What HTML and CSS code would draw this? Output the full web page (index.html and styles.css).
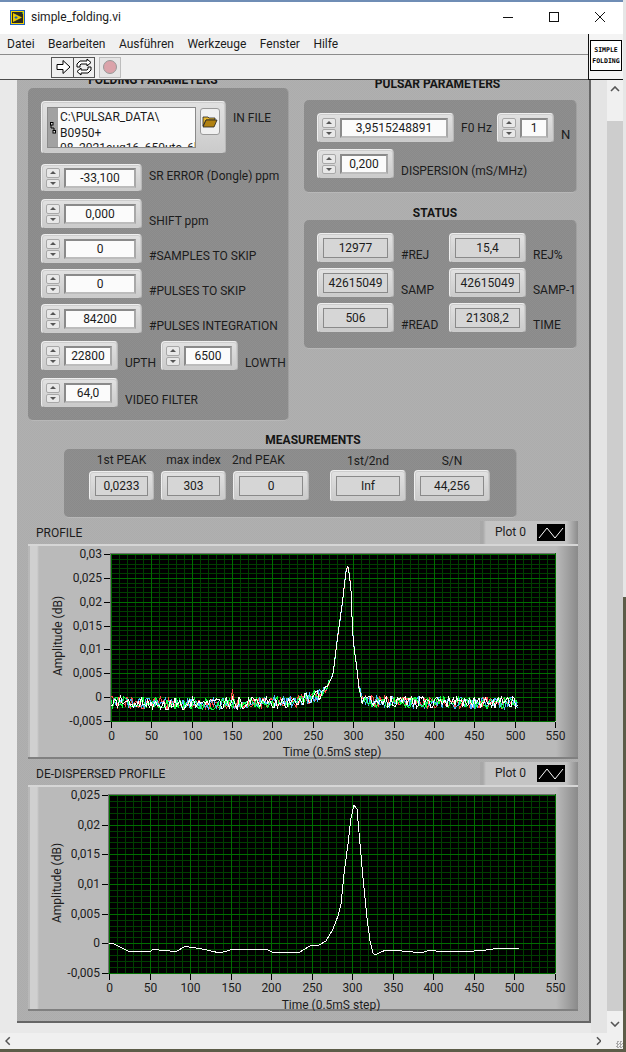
FILE: index.html
```html
<!DOCTYPE html>
<html lang="de">
<head>
<meta charset="utf-8">
<title>simple_folding.vi</title>
<link rel="stylesheet" href="styles.css">
</head>
<body>
<div class="window">
  <header class="titlebar">
    <svg class="vi-icon" viewBox="0 0 15 15" width="15" height="15">
      <rect x="0.5" y="0.5" width="14" height="14" fill="#f4d000" stroke="#1c5fc0"/>
      <rect x="2" y="2" width="11" height="11" fill="#2a2a20"/>
      <path d="M3 3L12 7.5L3 12Z" fill="#e8c800"/>
      <path d="M4.5 7.5h3M6 6v3" stroke="#1c5fc0" fill="none"/>
      <path d="M12 2h1v2h-1z" fill="#30a040"/>
    </svg>
    <span class="title-text">simple_folding.vi</span>
    <span class="winbtns">
      <svg viewBox="0 0 12 12" width="12" height="12"><path d="M1 6.5h10" stroke="#111" fill="none"/></svg>
      <svg viewBox="0 0 12 12" width="12" height="12"><rect x="1.5" y="1.5" width="9" height="9" stroke="#111" fill="none"/></svg>
      <svg viewBox="0 0 12 12" width="12" height="12"><path d="M1 1l10 10M11 1L1 11" stroke="#111" fill="none"/></svg>
    </span>
  </header>
  <nav class="menubar">
    <span>Datei</span><span>Bearbeiten</span><span>Ausführen</span><span>Werkzeuge</span><span>Fenster</span><span>Hilfe</span>
  </nav>
  <div class="toolbar">
    <div class="btn-group">
      <span class="tb-btn">
        <svg viewBox="0 0 18 18" width="18" height="18"><path d="M3 6.5h6V2.5l7 6.5-7 6.5v-4H3z" fill="#fff" stroke="#000"/></svg>
      </span>
      <span class="tb-btn">
        <svg viewBox="0 0 20 18" width="20" height="18"><path d="M3 9V6l3-3h7V1l4 3.5L13 8V6H7L6 7v2zM17 9v3l-3 3H7v2l-4-3.5L7 10v2h6l1-1V9z" fill="#fff" stroke="#000"/></svg>
      </span>
    </div>
    <span class="stop-btn"><span class="stop-dot"></span></span>
    <div class="vi-badge"><span class="vi-badge-box">SIMPLE<br>FOLDING</span></div>
  </div>
  <div class="workarea">
    <main class="canvas">
      <section class="upper">
        <div class="col-left">
          <h2 class="head head-fold">FOLDING PARAMETERS</h2>
          <div class="group group-fold">
            <div class="row">
              <div class="ctl ctl-file">
                <div class="pathbox">
                  <span class="pathbar">
                    <svg viewBox="0 0 6 12" width="6" height="12"><path d="M1 2v4h3v4" fill="none" stroke="#000"/><rect x="0.5" y="0.5" width="2.5" height="2.5" fill="#ddd" stroke="#000"/><rect x="3" y="8.5" width="2.5" height="2.5" fill="#ddd" stroke="#000"/></svg>
                  </span>
                  <span class="pathtext">C:\PULSAR_DATA\<br>B0950+<br>08_2021aug16_650utc_6b</span>
                </div>
                <span class="browse">
                  <svg viewBox="0 0 16 13" width="16" height="13"><path d="M1 2h5l1 1h6v2H4L1 11z" fill="#e8b830" stroke="#222" stroke-width=".8"/><path d="M1 12L4 5h11l-3 7z" fill="#b08010" stroke="#222" stroke-width=".8"/></svg>
                </span>
              </div>
              <span class="lab lab-file">IN FILE</span>
            </div>
            <div class="row gap10">
              <div class="ctl num num-short w-wide"><span class="spin"><i class="up"></i><i class="dn"></i></span><span class="field">-33,100</span></div>
              <span class="lab lab-high">SR ERROR (Dongle) ppm</span>
            </div>
            <div class="row gap7">
              <div class="ctl num w-wide"><span class="spin"><i class="up"></i><i class="dn"></i></span><span class="field">0,000</span></div>
              <span class="lab">SHIFT ppm</span>
            </div>
            <div class="row gap5">
              <div class="ctl num w-wide"><span class="spin"><i class="up"></i><i class="dn"></i></span><span class="field">0</span></div>
              <span class="lab">#SAMPLES TO SKIP</span>
            </div>
            <div class="row gap5">
              <div class="ctl num w-wide"><span class="spin"><i class="up"></i><i class="dn"></i></span><span class="field">0</span></div>
              <span class="lab">#PULSES TO SKIP</span>
            </div>
            <div class="row gap5">
              <div class="ctl num w-wide"><span class="spin"><i class="up"></i><i class="dn"></i></span><span class="field">84200</span></div>
              <span class="lab">#PULSES INTEGRATION</span>
            </div>
            <div class="row gap7">
              <div class="ctl num w-mid"><span class="spin"><i class="up"></i><i class="dn"></i></span><span class="field">22800</span></div>
              <span class="lab lab-fix36">UPTH</span>
              <div class="ctl num w-mid"><span class="spin"><i class="up"></i><i class="dn"></i></span><span class="field">6500</span></div>
              <span class="lab">LOWTH</span>
            </div>
            <div class="row gap7">
              <div class="ctl num w-mid"><span class="spin"><i class="up"></i><i class="dn"></i></span><span class="field">64,0</span></div>
              <span class="lab">VIDEO FILTER</span>
            </div>
          </div>
        </div>
        <div class="col-right">
          <h2 class="head head-pulsar">PULSAR PARAMETERS</h2>
          <div class="group group-pulsar">
            <div class="row">
              <div class="ctl num w-f0"><span class="spin"><i class="up"></i><i class="dn"></i></span><span class="field">3,9515248891</span></div>
              <span class="lab lab-mid lab-fix36">F0 Hz</span>
              <div class="ctl num w-n"><span class="spin"><i class="up"></i><i class="dn"></i></span><span class="field">1</span></div>
              <span class="lab lab-n">N</span>
            </div>
            <div class="row gap6">
              <div class="ctl num w-mid"><span class="spin"><i class="up"></i><i class="dn"></i></span><span class="field">0,200</span></div>
              <span class="lab">DISPERSION (mS/MHz)</span>
            </div>
          </div>
          <h2 class="head head-status">STATUS</h2>
          <div class="group group-status">
            <div class="row">
              <div class="ctl ind w-mid"><span class="field">12977</span></div><span class="lab lab-fix48">#REJ</span>
              <div class="ctl ind w-mid"><span class="field">15,4</span></div><span class="lab">REJ%</span>
            </div>
            <div class="row gap5">
              <div class="ctl ind w-mid"><span class="field">42615049</span></div><span class="lab lab-fix48">SAMP</span>
              <div class="ctl ind w-mid"><span class="field">42615049</span></div><span class="lab">SAMP-1</span>
            </div>
            <div class="row gap5">
              <div class="ctl ind w-mid"><span class="field">506</span></div><span class="lab lab-fix48">#READ</span>
              <div class="ctl ind w-mid"><span class="field">21308,2</span></div><span class="lab">TIME</span>
            </div>
          </div>
        </div>
      </section>

      <h2 class="head head-meas">MEASUREMENTS</h2>
      <section class="group group-meas">
        <div class="cell"><span class="cap">1st PEAK</span><div class="ctl ind w-m1"><span class="field">0,0233</span></div></div>
        <div class="cell"><span class="cap">max index</span><div class="ctl ind w-m1"><span class="field">303</span></div></div>
        <div class="cell"><span class="cap cap-left">2nd PEAK</span><div class="ctl ind w-m2"><span class="field">0</span></div></div>
        <div class="cell cell-tall cell-gap"><span class="cap">1st/2nd</span><div class="ctl ind w-m2 tall"><span class="field">Inf</span></div></div>
        <div class="cell cell-tall"><span class="cap">S/N</span><div class="ctl ind w-m2 tall"><span class="field">44,256</span></div></div>
      </section>

      <section class="graph">
        <div class="graph-head">
          <span class="graph-name">PROFILE</span>
          <div class="legend"><span>Plot 0</span><svg viewBox="0 0 28 17" width="28" height="17"><rect width="28" height="17" fill="#000"/><path d="M2 14L10 4l8 10 8-10" stroke="#fff" fill="none"/></svg></div>
        </div>
        <div class="frame frame-a"><svg id="plot-a" class="plot" viewBox="28 543 550 215" width="550" height="215"></svg></div>
      </section>
      <section class="graph">
        <div class="graph-head">
          <span class="graph-name">DE-DISPERSED PROFILE</span>
          <div class="legend"><span>Plot 0</span><svg viewBox="0 0 28 17" width="28" height="17"><rect width="28" height="17" fill="#000"/><path d="M2 14L10 4l8 10 8-10" stroke="#fff" fill="none"/></svg></div>
        </div>
        <div class="frame frame-b"><svg id="plot-b" class="plot" viewBox="28 784 550 226" width="550" height="226"></svg></div>
      </section>
    </main>
    <div class="sideband"></div>
    <div class="vscroll">
      <svg class="chev" viewBox="0 0 10 6" width="10" height="6"><path d="M1 5l4-4 4 4" fill="none" stroke="#555" stroke-width="1.6"/></svg>
      <span class="vthumb"></span>
      <svg class="chev" viewBox="0 0 10 6" width="10" height="6"><path d="M1 1l4 4 4-4" fill="none" stroke="#555" stroke-width="1.6"/></svg>
    </div>
  </div>
  <div class="hscroll">
    <svg viewBox="0 0 6 10" width="6" height="10"><path d="M5 1L1 5l4 4" fill="none" stroke="#555" stroke-width="1.6"/></svg>
    <svg class="hright" viewBox="0 0 6 10" width="6" height="10"><path d="M1 1l4 4-4 4" fill="none" stroke="#555" stroke-width="1.6"/></svg>
    <span class="grip"></span>
  </div>
</div>
<script src="script.js"></script>
</body>
</html>
```
FILE: styles.css
```css
* { box-sizing: border-box; }
html, body { margin: 0; height: 100%; }
body {
  width: 626px; height: 1052px; overflow: hidden;
  background: linear-gradient(#e6e6e6 0 597px, #5c5c48 597px);
  font: 12px/15px Roboto, "Noto Sans", sans-serif; color: #1c1c1c;
}
.window { width: 623px; height: 1049px; display: flex; flex-direction: column; background: #e9e9e9; }

.titlebar {
  height: 34px; background: #fff; border-top: 2px solid #6f8db5;
  display: flex; align-items: center; padding: 0 0 2px 10px;
}
.vi-icon { flex: none; }
.title-text { margin-left: 6px; font-size: 12px; }
.winbtns { margin-left: auto; display: flex; gap: 34px; padding-right: 17px; }

.menubar {
  height: 21px; background: #f0f0f0; border-bottom: 1px solid #8c8c8c;
  display: flex; gap: 13.5px; padding-left: 7px; align-items: center;
}
.toolbar {
  height: 25px; background: #f0f0f0; border-bottom: 1px solid #4c4c4c;
  display: flex; align-items: center; padding-left: 51px; position: relative;
}
.btn-group { display: flex; height: 21px; border: 1px solid #555; background: #efefef; }
.tb-btn { width: 21px; display: flex; align-items: center; justify-content: center; }
.tb-btn + .tb-btn { border-left: 1px solid #555; }
.stop-btn {
  margin-left: 4px; width: 22px; height: 21px; border: 1px solid #bdbdbd; background: #e6e6e6;
  display: flex; align-items: center; justify-content: center;
}
.stop-dot { width: 14px; height: 14px; border-radius: 50%; background: #dba3aa; border: 1px solid #999; }
.vi-badge {
  position: absolute; right: 0; bottom: -1px; width: 35px; height: 46px;
  background: #f4f4f4; border-left: 1px solid #111; border-bottom: 1px solid #111;
  display: flex; align-items: flex-start; justify-content: center; padding-top: 6px;
}
.vi-badge-box {
  width: 32px; height: 31px; background: #fff; border: 1px solid #000;
  font: 700 6.5px/11px "DejaVu Sans Mono", monospace; color: #000; text-align: center; padding-top: 4px; white-space: nowrap;
}

.workarea { flex: 1; min-height: 0; display: flex; background: #e9e9e9; padding-left: 17px; }
.canvas {
  width: 574px; flex: none; overflow: hidden; padding-left: 11px;
  background: repeating-conic-gradient(#acacac 0 25%, #b0b0b0 0 50%) 0 0/2px 2px;
  border-right: 2px solid #666; border-bottom: 2px solid #666; height: 943px;
}
.sideband { width: 16px; flex: none; background: #e4e4e4; }
.vscroll { width: 16px; flex: none; background: #f0f0f0; display: flex; flex-direction: column; align-items: center; }
.chev { flex: none; margin: 6px 0; }
.vthumb { width: 16px; flex: 1; background: #cdcdcd; margin: 23px 0 4px; }
.hscroll {
  height: 16px; background: #f0f0f0; display: flex; align-items: center; padding-left: 5px;
}
.hright { margin-left: 585px; }
.grip { width: 7px; height: 7px; margin: 6px 0 0 15px; background: repeating-conic-gradient(#aaa 0 25%, #f0f0f0 0 50%) 0 0/3px 3px; }

.upper { display: flex; height: 341px; }
.col-left { width: 261px; flex: none; }
.col-right { width: 273px; flex: none; margin-left: 15px; }
.head { margin: 0; font-size: 12px; font-weight: 700; text-align: center; color: #151515; }
.head-fold { height: 16px; line-height: 16px; margin-top: -8px; padding-right: 11px; }
.head-pulsar { height: 20px; line-height: 20px; margin-top: -6px; margin-bottom: 6px; padding-right: 6px; }
.head-status { height: 27px; line-height: 16px; padding: 12px 11px 0 0; }
.head-meas { height: 16px; line-height: 16px; margin: 11px 0 1px; width: 570px; }

.group {
  background: repeating-conic-gradient(#8a8a8a 0 25%, #8f8f8f 0 50%) 0 0/2px 2px;
  border-radius: 5px; border-bottom: 1px solid #b8b8b8; border-right: 1px solid #a0a0a0;
}
.group-fold { height: 333px; padding: 13px 0 0 13px; }
.group-pulsar { height: 93px; padding: 13px 0 0 13px; }
.group-status { height: 129px; padding: 13px 0 0 13px; }
.group-meas { width: 453px; height: 69px; margin-left: 36px; padding: 3px 0 0 25px; display: flex; align-items: flex-end; gap: 7px; }

.row { display: flex; align-items: flex-start; }
.gap5 { margin-top: 5px; }
.gap6 { margin-top: 6px; }
.gap7 { margin-top: 7px; }
.gap10 { margin-top: 10px; }

.ctl {
  flex: none; display: flex; align-items: center; height: 30px; border-radius: 4px;
  background: linear-gradient(#e2e2e2, #cacaca);
  border: 1px solid #efefef; border-bottom-color: #8c8c8c; border-right-color: #b8b8b8;
  box-shadow: inset 0 0 0 1px #cdcdcd;
  padding: 0 4px;
}
.num-short { height: 28px; }
.w-wide { width: 101px; }
.w-mid { width: 77px; }
.w-f0 { width: 137px; }
.w-n { width: 57px; }
.w-m1 { width: 65px; }
.w-m2 { width: 76px; }
.spin { flex: none; width: 14px; height: 20px; margin-right: 4px; display: flex; flex-direction: column; gap: 1px; }
.spin i {
  flex: 1; border: 1px solid #a8a8a8; border-radius: 2px; background: #e8e8e8; display: flex; align-items: center; justify-content: center;
}
.spin i::after { content: ""; border-left: 3px solid transparent; border-right: 3px solid transparent; }
.spin .up::after { border-bottom: 3px solid #555; }
.spin .dn::after { border-top: 3px solid #555; }
.field {
  flex: 1; height: 20px; min-width: 0; background: #fbfbfb; border: 2px solid #8a8a8a; border-right-color: #a8a8a8; border-bottom-color: #bcbcbc;
  text-align: center; line-height: 17px; color: #1c1c1c; margin-right: 1px;
}
.ind { padding: 0 5px; }
.ind .field { background: #d6d6d6; border-color: #8a8a8a; border-width: 1px; line-height: 19px; margin: 0; }
.tall { height: 32px; }
.cell { flex: none; display: flex; flex-direction: column; gap: 5px; margin-bottom: 16px; }
.cell-tall { gap: 3px; margin-bottom: 15px; }
.cell-gap { margin-left: 14px; margin-right: 1px; }
.cap { height: 16px; line-height: 18px; text-align: center; white-space: nowrap; position: relative; top: 1px; }
.cap-left { text-align: left; margin-left: -1px; }

.lab { margin: 15px 0 0 7px; white-space: nowrap; }
.lab-high { margin-top: 5px; }
.lab-file { margin-top: 10px; }
.lab-mid { margin-top: 8px; }
.lab-n { margin-top: 14px; font-size: 13px; }
.lab-fix36 { width: 29px; margin-right: 7px; }
.lab-fix48 { width: 48px; }

.ctl-file { width: 185px; height: 53px; padding: 5px; align-items: flex-start; }
.pathbox { width: 149px; height: 41px; display: flex; border: 1px solid #8a8a8a; overflow: hidden; flex: none; }
.pathbar { width: 10px; flex: none; background: #a2a2a2; display: flex; align-items: center; justify-content: center; }
.pathtext { flex: 1; background: #fbfbfb; padding: 2px 0 0 2px; white-space: nowrap; overflow: hidden; line-height: 15.5px; }
.browse {
  margin: 1px 0 0 4px; width: 20px; height: 27px; border: 1px solid #9a9a9a; border-radius: 3px; background: #f0f0f0;
  display: flex; align-items: center; justify-content: center; flex: none;
}

.graph { width: 550px; }
.graph-head { height: 23px; display: flex; justify-content: space-between; align-items: flex-end; }
.graph-name { margin: 0 0 3px 8px; }
.legend {
  width: 98px; height: 23px; display: flex; align-items: center; padding: 0 13px 0 15px; justify-content: space-between;
  background: linear-gradient(90deg, #a8a8a8 0 3px, #c4c4c4 6px 88%, #8c8c8c);
}
.frame {
  height: 215px; width: 550px;
  background: linear-gradient(90deg, #b8b8b8 0 2px, #d0d0d0 2px 9px, #bababa 11px 96%, #8a8a8a 100%);
  box-shadow: inset 0 2px 0 #d6d6d6, inset 0 -2px 0 #808080;
}
.frame-b { height: 226px; }
.plot { display: block; font: 12px Roboto, "Noto Sans", sans-serif; fill: #1c1c1c; }
.group-meas + .graph { margin-top: 3px; }
.graph + .graph { margin-top: 3px; }
```
FILE: script.js
```js
(function () {
  var NS = 'http://www.w3.org/2000/svg';
  var MINOR = '#003f00', MAJOR = '#006e00';
  function el(parent, name, attrs, text) {
    var n = document.createElementNS(NS, name);
    for (var k in attrs) n.setAttribute(k, attrs[k]);
    if (text !== undefined) n.textContent = text;
    parent.appendChild(n);
    return n;
  }
  function lerp(points, x) {
    for (var i = 1; i < points.length; i++) {
      if (x <= points[i][0]) {
        var a = points[i - 1], b = points[i];
        return a[1] + (b[1] - a[1]) * (x - a[0]) / (b[0] - a[0]);
      }
    }
    return points[points.length - 1][1];
  }
  function frame(svg, c) {
    el(svg, 'rect', { x: c.x0, y: c.y0, width: c.x1 - c.x0, height: c.y1 - c.y0, fill: '#000' });
    var sx = (c.xMax - c.xMin) / 11, i, j, x, y;
    var stepY = (c.yBottom - c.yTop) / (c.yLabels.length - 1);
    for (i = 0; i < 11; i++) {
      for (j = 1; j < 5; j++) {
        x = Math.round(c.xMin + (i + j / 5) * sx) + 0.5;
        el(svg, 'path', { d: 'M' + x + ' ' + c.y0 + 'V' + c.y1, stroke: MINOR, fill: 'none', 'shape-rendering': 'crispEdges' });
      }
    }
    for (i = 0; i < c.yLabels.length - 1; i++) {
      for (j = 1; j < 5; j++) {
        y = Math.round(c.yTop + (i + j / 5) * stepY) + 0.5;
        el(svg, 'path', { d: 'M' + c.x0 + ' ' + y + 'H' + c.x1, stroke: MINOR, fill: 'none', 'shape-rendering': 'crispEdges' });
      }
    }
    for (i = 0; i <= 11; i++) {
      x = Math.round(c.xMin + i * sx) + 0.5;
      el(svg, 'path', { d: 'M' + x + ' ' + c.y0 + 'V' + c.y1, stroke: MAJOR, fill: 'none', 'shape-rendering': 'crispEdges' });
      el(svg, 'path', { d: 'M' + x + ' ' + (c.y1 + 1) + 'v6', stroke: '#000', fill: 'none', 'shape-rendering': 'crispEdges' });
      el(svg, 'text', { x: x, y: c.y1 + 19, 'text-anchor': 'middle' }, String(i * 50));
    }
    c.yLabels.forEach(function (label, k) {
      var yy = Math.round(c.yTop + k * stepY) + 0.5;
      el(svg, 'path', { d: 'M' + c.x0 + ' ' + yy + 'H' + c.x1, stroke: MAJOR, fill: 'none', 'shape-rendering': 'crispEdges' });
      el(svg, 'path', { d: 'M' + (c.x0 - 6) + ' ' + yy + 'h6', stroke: '#000', fill: 'none', 'shape-rendering': 'crispEdges' });
      el(svg, 'text', { x: c.x0 - 8, y: yy + 3, 'text-anchor': 'end' }, label);
    });
    el(svg, 'path', { d: 'M' + c.x0 + ' ' + c.y1 + 'V' + c.y0 + 'H' + c.x1, stroke: '#707070', fill: 'none', 'shape-rendering': 'crispEdges' });
    el(svg, 'text', { x: c.timeX, y: c.timeY, 'text-anchor': 'middle' }, 'Time (0.5mS step)');
    el(svg, 'text', { x: 0, y: 0, 'text-anchor': 'middle', transform: 'translate(' + c.ampX + ' ' + c.ampY + ') rotate(-90)' }, 'Amplitude (dB)');
  }

  /* Profile graph */
  var a = document.getElementById('plot-a');
  frame(a, { x0: 110, x1: 555, y0: 552, y1: 720, xMin: 111, xMax: 555, yTop: 553, yBottom: 720,
    yLabels: ['0,03', '0,025', '0,02', '0,015', '0,01', '0,005', '0', '-0,005'],
    timeX: 332, timeY: 755, ampX: 62, ampY: 635 });
  var envelope = [[111, 701], [200, 703], [260, 702], [300, 700], [312, 696], [322, 692], [327, 686],
    [333, 674], [337, 640], [342, 605], [346, 570], [348.5, 564], [351, 590], [353, 640], [356, 660],
    [359, 685], [362, 697], [368, 701], [518, 702]];
  var seed = 12345;
  function rnd() { seed = (seed * 1664525 + 1013904223) >>> 0; return seed / 4294967296; }
  ['#ff4a4a', '#4ab8ff', '#10ff40', '#ffffff'].forEach(function (col, t) {
    var pts = [];
    for (var x = 111; x <= 518; x += 1.6) {
      var base = lerp(envelope, x);
      var amp = base < 680 ? 1 : (base < 692 ? 3 : 6);
      var y = base + (rnd() - 0.5) * 2 * amp;
      if (t === 0 && Math.abs(x - 232) < 1) y = 688;
      pts.push(x.toFixed(1) + ',' + y.toFixed(1));
    }
    el(a, 'polyline', { points: pts.join(' '), fill: 'none', stroke: col, 'stroke-width': 1, 'shape-rendering': 'crispEdges' });
  });

  /* De-dispersed graph */
  var b = document.getElementById('plot-b');
  frame(b, { x0: 108, x1: 555, y0: 793, y1: 972, xMin: 109, xMax: 555, yTop: 794, yBottom: 972,
    yLabels: ['0,025', '0,02', '0,015', '0,01', '0,005', '0', '-0,005'],
    timeX: 331, timeY: 1008, ampX: 61, ampY: 882 });
  var line = [[109, 942.5], [113, 942.5], [122, 947], [130, 951], [150, 950.5], [153, 948.5], [170, 950], [177, 950],
    [185, 945.5], [200, 947.5], [220, 952], [230, 949], [267, 948.5], [272, 951], [300, 951], [310, 945], [319, 944],
    [326, 940], [333, 928], [338, 915], [341, 903], [344, 873], [348, 843], [351, 817], [354, 804], [357, 808],
    [360, 843], [363, 877], [367, 917], [370, 940], [373, 952], [375, 954], [381, 951], [386, 949], [396, 949.5],
    [413, 951], [423, 951.5], [428, 949.5], [443, 950.5], [466, 950.5], [483, 949.5], [496, 947.5], [519, 947.5]];
  el(b, 'polyline', { points: line.map(function (p) { return p.join(','); }).join(' '), fill: 'none', stroke: '#fff', 'stroke-width': 1, 'shape-rendering': 'crispEdges' });
})();
```
